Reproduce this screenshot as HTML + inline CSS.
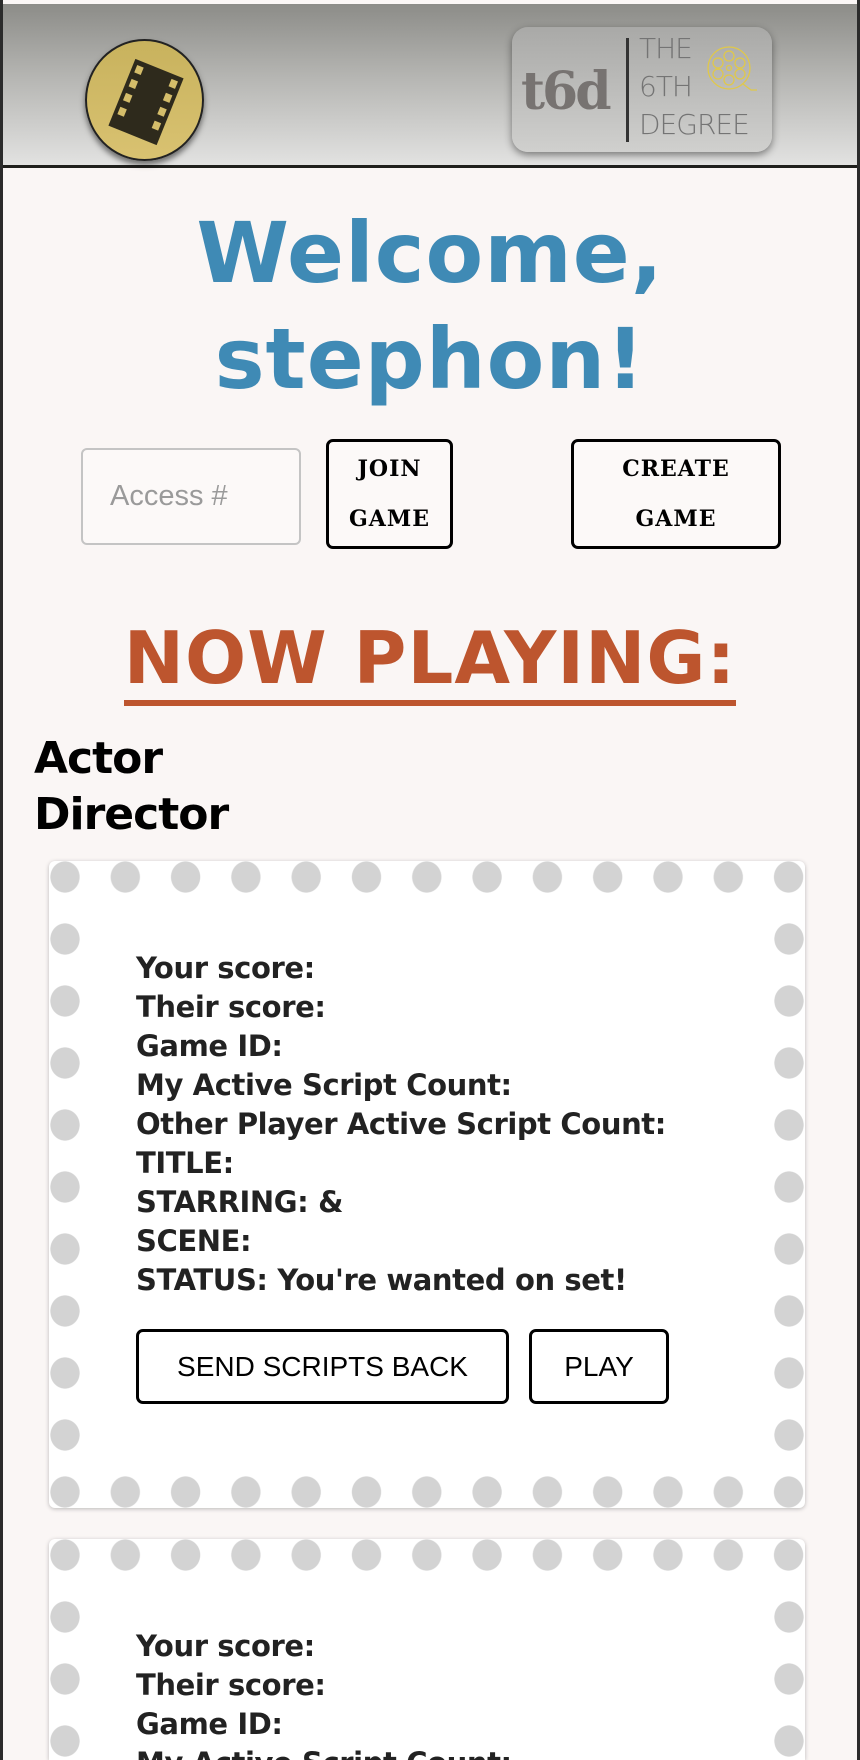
<!DOCTYPE html>
<html style="height:1760px;overflow:hidden"><head><meta charset="utf-8"><style>
*{margin:0;padding:0;box-sizing:border-box}
body{width:860px;height:1760px;overflow:hidden;background:#2b2b2b;font-family:"Liberation Sans",sans-serif;position:relative}
.page{position:absolute;left:3px;right:3px;top:0;bottom:0;background:#faf6f5}
.hdr{position:absolute;left:3px;right:3px;top:4px;height:164px;background:linear-gradient(#8c8c88,#b5b5b2 45%,#e2e2e1);border-bottom:3px solid #1f1f1c}
.circ{position:absolute;left:82px;top:35px;width:119px;height:122px;border-radius:50%;background:linear-gradient(#c8b25d,#d9c271);border:2px solid #222;box-shadow:0 4px 6px rgba(0,0,0,.5)}
.logo{position:absolute;left:512px;top:27px;width:260px;height:125px;border-radius:16px;background:linear-gradient(#a9a9a7,#d0d0ce);box-shadow:0 3px 8px rgba(0,0,0,.45)}
.abs{position:absolute}
.welcome{position:absolute;left:0;width:860px;text-align:center;color:#3f8ab5;font-family:"DejaVu Sans",sans-serif;font-weight:bold;font-size:84px;line-height:106px;top:200px;letter-spacing:1px}
.inp{position:absolute;left:81px;top:448px;width:220px;height:97px;border:2px solid #c4c4c4;border-radius:6px;background:#fcf9f8;color:#9a9a9a;font-size:29px;padding:30px 0 0 27px}
.btn{position:absolute;border:3px solid #000;border-radius:7px;background:#fcf9f8;text-align:center;font-family:"DejaVu Serif",serif;font-weight:bold;font-size:22px;line-height:50px;color:#000;letter-spacing:1px}
.np{position:absolute;left:0;width:860px;text-align:center;top:608px;color:#bd552e;font-family:"DejaVu Sans",sans-serif;font-weight:bold;font-size:72px;line-height:100px;letter-spacing:1px}
.np span{border-bottom:6px solid #bd552e;padding-bottom:0}
.ad{position:absolute;left:34px;top:731px;font-family:"DejaVu Sans",sans-serif;font-weight:bold;font-size:44px;line-height:56px;color:#000;letter-spacing:-1px}
.card{position:absolute;left:49px;width:756px;background:#fff;border-radius:6px;box-shadow:0 1px 4px rgba(0,0,0,.25);overflow:hidden}
.dots-h{position:absolute;left:0;right:0;height:32px;background:radial-gradient(ellipse 15px 16px at 16px 16px,#d3d3d3 95%,transparent 100%);background-size:60.3px 32px}
.dots-v{position:absolute;top:62px;width:32px;background:radial-gradient(ellipse 15px 16px at 16px 16px,#d3d3d3 95%,transparent 100%);background-size:32px 62px}
.txt{position:absolute;left:87px;font-family:"DejaVu Sans",sans-serif;font-weight:bold;font-size:29px;line-height:39px;color:#222;letter-spacing:-0.4px;white-space:nowrap}
.b2{position:absolute;border:3px solid #000;border-radius:7px;font-size:28px;text-align:center;line-height:69px;color:#000;background:#fff}
</style></head><body>
<div class="page"></div>
<div class="hdr">
 <div class="circ">
  <svg width="119" height="122" viewBox="0 0 119 122"><g transform="rotate(22 59 61)"><rect x="33" y="25" width="52" height="72" fill="#2e2a1c"/><g fill="#d4bd6a"><rect x="37" y="30" width="7" height="8"/><rect x="37" y="45" width="7" height="8"/><rect x="37" y="60" width="7" height="8"/><rect x="37" y="75" width="7" height="8"/><rect x="74" y="30" width="7" height="8"/><rect x="74" y="45" width="7" height="8"/><rect x="74" y="60" width="7" height="8"/><rect x="74" y="75" width="7" height="8"/></g></g></svg>
 </div>
</div>
<div class="logo">
 <div class="abs" style="left:9px;top:34px;font-family:'DejaVu Serif',serif;font-weight:bold;font-size:52px;color:#777371;letter-spacing:-3px">t6d</div>
 <div class="abs" style="left:114px;top:11px;width:3px;height:104px;background:#333"></div>
 <div class="abs" style="left:127px;top:3px;font-family:'DejaVu Sans',sans-serif;font-size:28px;line-height:38px;color:#747474;font-weight:200;letter-spacing:-1px">THE<br>6TH<br>DEGREE</div>
 <svg class="abs" style="left:193px;top:17px" width="55" height="55" viewBox="0 0 55 55"><g fill="none" stroke="#e0c84a" stroke-width="1.3"><circle cx="24" cy="24" r="21"/><circle cx="24" cy="12" r="5"/><circle cx="24" cy="36" r="5"/><circle cx="13" cy="19" r="5"/><circle cx="35" cy="19" r="5"/><circle cx="13" cy="30" r="5"/><circle cx="35" cy="30" r="5"/><circle cx="24" cy="24" r="2.5"/><path d="M38 40 L46 46 L52 46"/></g></svg>
</div>
<div class="welcome">Welcome,<br>stephon!</div>
<div class="inp">Access #</div>
<div class="btn" style="left:326px;top:439px;width:127px;height:110px;padding-top:2px">JOIN<br>GAME</div>
<div class="btn" style="left:571px;top:439px;width:210px;height:110px;padding-top:2px">CREATE<br>GAME</div>
<div class="np"><span>NOW PLAYING:</span></div>
<div class="ad">Actor<br>Director</div>
<div class="card" style="top:861px;height:647px">
 <div class="dots-h" style="top:0"></div>
 <div class="dots-h" style="bottom:0"></div>
 <div class="dots-v" style="left:0;height:540px"></div>
 <div class="dots-v" style="right:0;height:540px"></div>
 <div class="txt" style="top:88px">Your score:<br>Their score:<br>Game ID:<br>My Active Script Count:<br>Other Player Active Script Count:<br>TITLE:<br>STARRING: &amp;<br>SCENE:<br>STATUS: You're wanted on set!</div>
 <div class="b2" style="left:87px;top:468px;width:373px;height:75px">SEND SCRIPTS BACK</div>
 <div class="b2" style="left:480px;top:468px;width:140px;height:75px">PLAY</div>
</div>
<div class="card" style="top:1539px;height:221px;border-radius:6px 6px 0 0">
 <div class="dots-h" style="top:0"></div>
 <div class="dots-v" style="left:0;height:160px"></div>
 <div class="dots-v" style="right:0;height:160px"></div>
 <div class="txt" style="top:88px">Your score:<br>Their score:<br>Game ID:<br>My Active Script Count:</div>
</div>
</body></html>
